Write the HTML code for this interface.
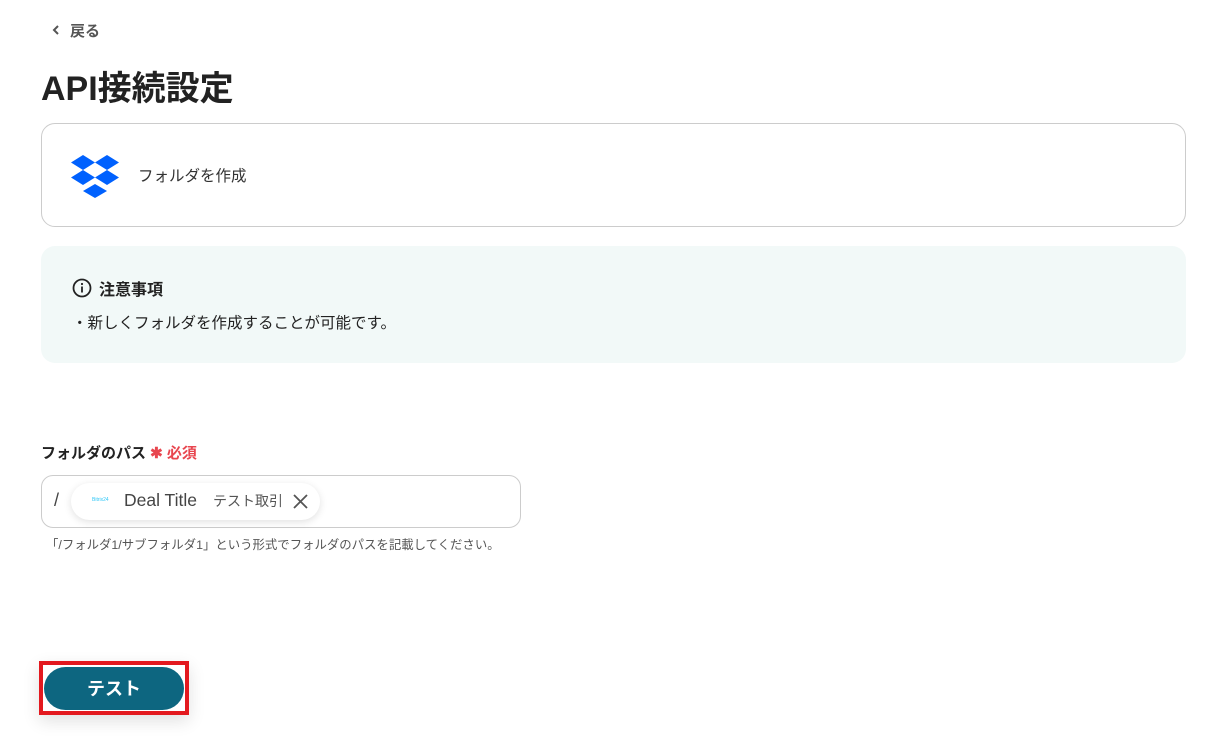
<!DOCTYPE html>
<html><head><meta charset="utf-8"><style>
*{margin:0;padding:0;box-sizing:border-box}
body{width:1212px;height:751px;background:#fff;font-family:"Liberation Sans","Noto Sans CJK JP",sans-serif;color:#222;position:relative;overflow:hidden}
.a{position:absolute}
</style></head><body>
<svg class="a" style="left:50px;top:24px" width="12" height="12" viewBox="0 0 12 12"><path d="M8 2L4 6l4 4" stroke="#555" stroke-width="2" fill="none"/></svg>
<div class="a" style="left:70px;top:20px;font-size:15px;color:#555;font-weight:bold">戻る</div>
<div class="a" style="left:41px;top:61px;font-size:34px;font-weight:bold;color:#222">API接続設定</div>
<div class="a" style="left:41px;top:123px;width:1145px;height:104px;border:1px solid #ccc;border-radius:14px"></div>
<svg class="a" style="left:71px;top:155px" width="48" height="44" viewBox="0 0 48 44">
<g fill="#0061fe">
<path d="M12 0L24 7.5 12 15 0 7.5z"/><path d="M36 0L48 7.5 36 15 24 7.5z"/>
<path d="M12 15L24 22.5 12 30 0 22.5z"/><path d="M36 15L48 22.5 36 30 24 22.5z"/>
<path d="M24 29L36 36 24 43 12 36z"/></g></svg>
<div class="a" style="left:138px;top:164px;font-size:15.5px;color:#333">フォルダを作成</div>
<div class="a" style="left:41px;top:246px;width:1145px;height:117px;background:#f2f9f8;border-radius:14px"></div>
<svg class="a" style="left:72px;top:278px" width="20" height="20" viewBox="0 0 20 20"><circle cx="10" cy="10" r="8.5" stroke="#222" stroke-width="1.8" fill="none"/><rect x="9.1" y="8.5" width="1.8" height="6" fill="#222"/><circle cx="10" cy="6" r="1.1" fill="#222"/></svg>
<div class="a" style="left:99px;top:276px;font-size:16px;font-weight:bold">注意事項</div>
<div class="a" style="left:72px;top:311px;font-size:15.5px;color:#222">・新しくフォルダを作成することが可能です。</div>
<div class="a" style="left:41px;top:442px;font-size:15px;font-weight:bold;color:#222">フォルダのパス <span style="color:#e8464f;font-size:15px">✱ 必須</span></div>
<div class="a" style="left:41px;top:475px;width:480px;height:53px;border:1px solid #ccc;border-radius:12px"></div>
<div class="a" style="left:54px;top:490px;font-size:18px;color:#444">/</div>
<div class="a" style="left:71px;top:483px;width:249px;height:37px;background:#fff;border-radius:19px;box-shadow:0 2px 8px rgba(0,0,0,.12)"></div>
<div class="a" style="left:92px;top:497px;font-size:5px;color:#2fc7f7">Bitrix24</div>
<div class="a" style="left:124px;top:490px;font-size:17.5px;color:#444">Deal Title</div>
<div class="a" style="left:213px;top:491px;font-size:14px;color:#555">テスト取引</div>
<svg class="a" style="left:293px;top:494px" width="15" height="15" viewBox="0 0 15 15"><path d="M1 1L14 14M14 1L1 14" stroke="#555" stroke-width="1.8"/></svg>
<div class="a" style="left:46px;top:535px;font-size:12.4px;color:#555">「/フォルダ1/サブフォルダ1」という形式でフォルダのパスを記載してください。</div>
<div class="a" style="left:39px;top:661px;width:150px;height:54px;border:4px solid #e3191f;box-shadow:0 6px 16px rgba(0,0,0,.12)"></div>
<div class="a" style="left:44px;top:667px;width:140px;height:43px;background:#0d6680;border-radius:22px;color:#fff;font-weight:bold;font-size:18px;text-align:center;line-height:45px">テスト</div>
</body></html>
